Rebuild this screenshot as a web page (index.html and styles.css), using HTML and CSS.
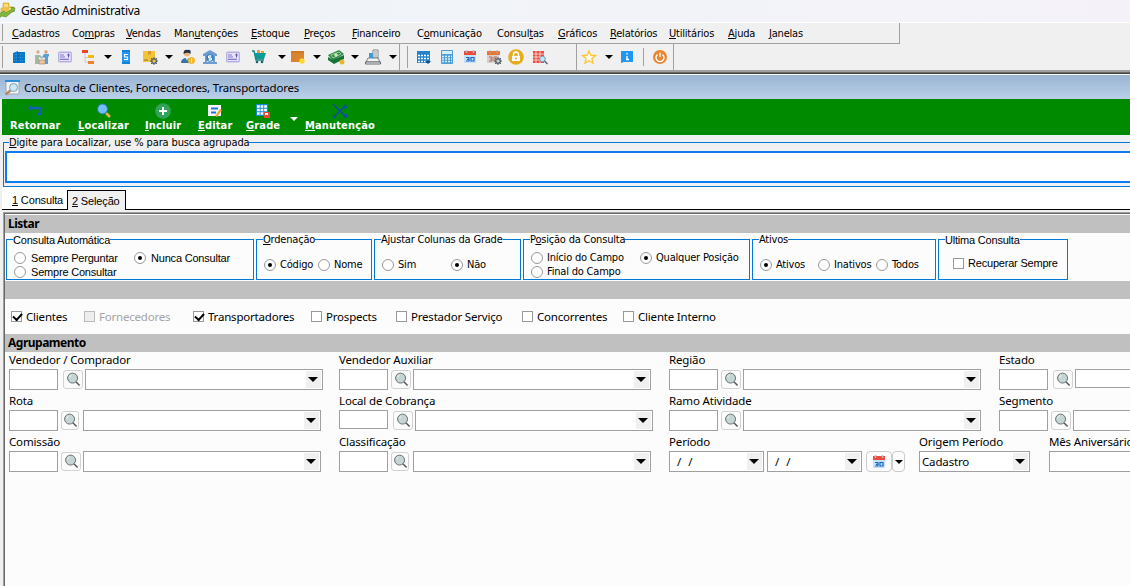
FILE: index.html
```html
<!DOCTYPE html>
<html lang="pt-BR">
<head>
<meta charset="utf-8">
<title>Gestão Administrativa</title>
<link rel="stylesheet" href="styles.css">
</head>
<body>
<svg class="defs" width="0" height="0">
  <symbol id="mag" viewBox="0 0 16 16"><path d="M10.500 10.500l4 4" stroke="#555" stroke-width="1.600"/><circle cx="7" cy="6.500" r="5.300" fill="#c5d4d4" stroke="#606868"/><path d="M4 6q0-2 2-3" stroke="#edf5f5" fill="none"/></symbol>
  <symbol id="card" viewBox="0 0 16 16"><rect x="1" y="2.500" width="14" height="11" rx="2" fill="#b5afe4"/><rect x="2.300" y="4" width="11.400" height="8" fill="#e5e2fa"/><path d="M3 6h4M3 8h5M3 10.300h9M10 6h3" stroke="#8279c8" stroke-width="1.200"/><path d="M11.500 4.500v4" stroke="#5e54b3"/></symbol>
  <symbol id="cal" viewBox="0 0 16 16"><path d="M2 5h12v9H2z" fill="#c3e1fb"/><path d="M2 2h12v4H2z" fill="#e94b3c"/><path d="M4.500 1v3M11.500 1v3" stroke="#b8bdc1" stroke-width="1.500"/><path d="M4 8.500h3v3.500H4M5 10.300h2M9 8.500h3v3.500H9z" fill="none" stroke="#1f65bf" stroke-width="1.200"/></symbol>
  <symbol id="gear" viewBox="0 0 8 8"><circle cx="4" cy="4" r="2.300" fill="none" stroke="#59666e" stroke-width="1.500"/><path d="M4 0v2M4 6v2M0 4h2M6 4h2M1 1l1.500 1.500M5.500 5.500L7 7M7 1L5.500 2.500M2.500 5.500L1 7" stroke="#59666e"/></symbol>
</svg>

<header class="titlebar">
  <svg class="logo" viewBox="0 0 16 16"><path d="M3 1h6v4h5v4l-5 3H1V6h2z" fill="#edc246" stroke="#dca529" stroke-width=".6"/><path d="M4 2h4v3H4zM9 6h4v3H9z" fill="#f6dc83"/><path d="M-1 12l5-3 2 2 6-4-1-2 4 1-1 4-1-1-7 6-4-1-3 2z" fill="#7fb744" stroke="#4e8b2b" stroke-width=".6"/></svg>
  <span>Gestão Administrativa</span>
</header>

<nav class="menubar">
  <span><u>C</u>adastros</span><span>Co<u>m</u>pras</span><span><u>V</u>endas</span><span>Man<u>u</u>tenções</span><span><u>E</u>stoque</span><span><u>P</u>reços</span><span><u>F</u>inanceiro</span><span>C<u>o</u>municação</span><span>Consul<u>t</u>as</span><span><u>G</u>ráficos</span><span><u>R</u>elatórios</span><span><u>U</u>tilitários</span><span><u>A</u>juda</span><span><u>J</u>anelas</span>
</nav>

<div class="toolbars">
  <div class="bar bar-main">
    <svg viewBox="0 0 16 16"><path d="M2 4l5-2v1h7v11H2z" fill="#0878cb"/><path d="M3 5.500h10M3 8.500h10M3 11.500h10" stroke="#2f97dd" stroke-dasharray="1 1"/><path d="M7 3v11" stroke="#075b9d"/></svg>
    <svg viewBox="0 0 16 16"><circle cx="4" cy="3" r="1.700" fill="#d3b083"/><circle cx="12" cy="3" r="1.700" fill="#d3a072"/><path d="M1 6h5l3 3-1 1-3-2v7H1z" fill="#a5b8a8"/><path d="M10 5h5v2l-1 1v7h-3V9L8 8z" fill="#5c9fd2"/><path d="M5 11h6v4H5z" fill="#ecc6a0" stroke="#ba815c" stroke-width=".7"/></svg>
    <svg><use href="#card"/></svg>
    <svg viewBox="0 0 16 16"><path d="M4 4v9h5M4 8.500h5" fill="none" stroke="#bbb" stroke-width=".7"/><path d="M1 1h6v3H1z" fill="#e3472a"/><path d="M7 6h6v3H7z" fill="#f4b713"/><path d="M7 12h6v3H7z" fill="#ee8235"/></svg>
    <i class="arrow"></i>
    <svg viewBox="0 0 16 16"><path d="M4 1h8v14H4z" fill="#2196f3"/><path d="M4 1h8v2H4zM4 13h8v2H4z" fill="#1281d4"/><path d="M10 5.500H6.500v2.500h3v2.500H6" fill="none" stroke="#fff" stroke-width="1.200"/></svg>
    <svg viewBox="0 0 16 16"><path d="M1 2h12v11H1z" fill="#f3c338"/><path d="M6 2h3v4l-1.500-1L6 6z" fill="#da962c"/><path d="M2 11h4" stroke="#937534"/><use href="#gear" x="8" y="8" width="8" height="8"/></svg>
    <i class="arrow"></i>
    <svg viewBox="0 0 16 16"><circle cx="7" cy="4.500" r="3" fill="#efb57b"/><path d="M3.500 5q0-5 4-4 4-1 3 4Q8 2.500 3.500 5" fill="#243445"/><path d="M1 14q0-5 6-5t6 5z" fill="#3273a9"/><path d="M6 9h2l-1 3z" fill="#fff"/><circle cx="11.500" cy="11.500" r="3.500" fill="#f4b82b"/><path d="M11.500 9.500v4" stroke="#fff0a0"/></svg>
    <svg viewBox="0 0 16 16"><path d="M1 5l7-4 7 4v2H1zM1 13h14v2H1zM3 7h2v6H3zM11 7h2v6h-2z" fill="#6b9bd1"/><circle cx="8" cy="9" r="3.700" fill="#397bbd"/><path d="M9.500 7h-3v2h3v2h-3M8 6v6" fill="none" stroke="#fff"/></svg>
    <svg><use href="#card"/></svg>
    <svg viewBox="0 0 16 16"><path d="M1 2h2l2 9h8" fill="none" stroke="#167b78" stroke-width="1.300"/><path d="M3 4h12l-2 6H5z" fill="#0c9b99"/><path d="M6 1h3v3H6zM10 2h3v2h-3z" fill="#ef9b38"/><circle cx="6" cy="13" r="1.300" fill="#17656d"/><circle cx="11" cy="13" r="1.300" fill="#17656d"/></svg>
    <i class="arrow"></i>
    <svg viewBox="0 0 16 16"><path d="M1 2h13v11H1z" fill="#d9832f"/><path d="M1 2h13v2H1z" fill="#ce7928"/><circle cx="12" cy="12" r="2.700" fill="#ffd82c"/></svg>
    <i class="arrow"></i>
    <svg class="cash" viewBox="0 0 18 16"><path d="M1 6l11-5 5 4-11 7z" fill="#2b8a45"/><path d="M1 8l5 3 11-5v4L7 15 1 11z" fill="#187238"/><path d="M4 6l8-3 2 2-8 4z" fill="none" stroke="#b9e1b0" stroke-width=".8"/><circle cx="9" cy="6" r="1.800" fill="#cce9bd"/><circle cx="15" cy="13" r="2.500" fill="#e3b92b"/></svg>
    <i class="arrow"></i>
    <svg viewBox="0 0 16 16"><path d="M8 1h5v8H8z" fill="#fff" stroke="#555" stroke-width=".7"/><path d="M9 3h3M9 5h3M9 7h3" stroke="#777" stroke-width=".8"/><path d="M3 9h10l2 4H1z" fill="#f0f3f5" stroke="#5b626b" stroke-width=".8"/><path d="M.5 13h15v2H.5z" fill="#eee" stroke="#474e57" stroke-width=".8"/><path d="M4 4h4v5H4z" fill="#3d9bd8"/></svg>
    <i class="arrow"></i>
  </div>
  <div class="bar bar-tools">
    <svg viewBox="0 0 16 16"><path d="M1 2h13v12H1z" fill="#2283cc"/><path d="M2 6.500h11M2 9.500h11M2 12.500h8" stroke="#fff" stroke-width="1.500" stroke-dasharray="2 1"/><path d="M9 12h6l-3 3z" fill="#174e7f"/></svg>
    <svg viewBox="0 0 16 16"><rect x="2" y="1" width="12" height="14" rx="1" fill="#4a9edb"/><path d="M3 2h10v3H3z" fill="#d8f0ff"/><path d="M3 7.500h10M3 10h10M3 12.500h10" stroke="#d9edfa" stroke-width="1.500" stroke-dasharray="2 1"/></svg>
    <svg><use href="#cal"/></svg>
    <svg viewBox="0 0 16 16"><path d="M1 5h12v9H1z" fill="#d4d0cf"/><path d="M1 2h13v4H1z" fill="#e67939"/><path d="M4 1v3M11 1v3" stroke="#aaa"/><path d="M3 8h3v4H3M4 10h2M8 12V8h3" fill="none" stroke="#b46d5c"/><use href="#gear" x="8" y="8" width="8" height="8"/></svg>
    <svg viewBox="0 0 16 16"><circle cx="8" cy="8" r="7.800" fill="#e5ad20"/><path d="M5.500 7V5.500a2.500 2.500 0 015 0V7" fill="none" stroke="#fff" stroke-width="1.500"/><path d="M4 7h8v5H4z" fill="#fff"/><circle cx="8" cy="9.500" r="1" fill="#e5ad20"/></svg>
    <svg viewBox="0 0 16 16"><path d="M1 2h11v12H1z" fill="#ed4941"/><path d="M1 5h11M1 8h11M1 11h11M4 2v12M8 2v12" stroke="#ffe6dc" stroke-width=".8"/><circle cx="10.500" cy="10" r="2.800" fill="#bce6ff" stroke="#7899ad"/><path d="M12.500 12l3 3" stroke="#47606c" stroke-width="1.300"/></svg>
  </div>
  <div class="bar bar-help">
    <svg viewBox="0 0 16 16"><path d="M8 2l1.800 4.200 4.700.4-3.600 3 1.100 4.600L8 11.700l-4 2.500 1.100-4.600-3.600-3 4.700-.4z" fill="#fffbea" stroke="#ffc32c" stroke-width="1.300"/></svg>
    <i class="arrow"></i>
    <svg viewBox="0 0 16 16"><path d="M2 2h12v11H5l-3 1z" fill="#2196f3"/><path d="M8 4v1.500M8 7v4M7 10.500h3" stroke="#fff" stroke-width="1.400"/></svg>
    <i class="separator"></i>
    <svg viewBox="0 0 16 16"><circle cx="8" cy="8" r="7" fill="#e98431"/><path d="M5.500 5.500a4 4 0 105 0M8 3.500V8" fill="none" stroke="#fff" stroke-width="1.400"/></svg>
  </div>
</div>

<main class="window">
  <div class="window-title">
    <svg viewBox="0 0 16 16"><path d="M1 1h13v13H1z" fill="#f2f5f7" stroke="#9ba8b2"/><path d="M0 0h15v2H0z" fill="#2c8eda"/><path d="M5.500 10.500l-5 4" stroke="#b48b5c" stroke-width="2.500"/><circle cx="8.500" cy="7.500" r="4" fill="#c9e9f7" stroke="#849cac"/></svg>
    <span>Consulta de Clientes, Fornecedores, Transportadores</span>
  </div>
  <div class="actions">
    <div><svg viewBox="0 0 16 16"><path d="M2 5h9q3 0 3 3t-3 3.500" fill="none" stroke="#1260b8" stroke-width="2.400"/><path d="M5 1v8L1 5z" fill="#1260b8"/><path d="M2 12h9" stroke="#1260b8" stroke-width="3" stroke-dasharray="1 1"/></svg><span>Retornar</span></div>
    <div><svg viewBox="0 0 16 16"><path d="M10 10l4 4" stroke="#e1b548" stroke-width="2.500"/><circle cx="6.500" cy="6" r="5" fill="#71bef8" stroke="#2c75bc"/></svg><span><u>L</u>ocalizar</span></div>
    <div><svg viewBox="0 0 16 16"><circle cx="8" cy="8" r="7.800" fill="#2fa45a"/><path d="M8 4v8M4 8h8" stroke="#fff" stroke-width="2"/></svg><span><u>I</u>ncluir</span></div>
    <div><svg viewBox="0 0 16 16"><path d="M1 2h13v11H1z" fill="#f5f8ff"/><path d="M4 5.500h7M4 9.500h5" stroke="#2772cf" stroke-width="2"/><path d="M8 13l5-7 2 1-5 7z" fill="#f4a72e"/></svg><span><u>E</u>ditar</span></div>
    <div><svg viewBox="0 0 16 16"><path d="M1 1h12v12H1z" fill="#188bd0"/><path d="M2 3.500h10M2 7h10M2 10.500h10" stroke="#fff" stroke-width="2.500" stroke-dasharray="2.700 .9"/><path d="M9 9h6v6H9z" fill="#e54a34"/><path d="M10 10h3v2h-3z" fill="#fff"/></svg><span><u>G</u>rade</span></div>
    <i class="arrow light"></i>
    <div><svg viewBox="0 0 16 16"><path d="M3 3l10 10M12 4l-9 9" stroke="#0d4f9f" stroke-width="1.700"/><path d="M1 1l2 2M11 5l3-4M12 5l3-1M11 13l3 1 1-3M1 12l2 3" fill="none" stroke="#0d4f9f" stroke-width="1.500"/></svg><span><u>M</u>anutenção</span></div>
  </div>

  <fieldset class="search"><legend><u>D</u>igite para Localizar, use % para busca agrupada</legend><div class="search-input"></div></fieldset>

  <div class="tabs"><span><u>1</u> Consulta</span><span class="active"><u>2</u> Seleção</span></div>

  <section class="panel">
    <h2>Listar</h2>
    <div class="groups">
      <fieldset class="plain g-auto two-rows"><legend>Consulta Automática</legend>
        <label><i class="radio"></i>Sempre Perguntar</label><label><i class="radio on"></i>Nunca Consultar</label><label><i class="radio"></i>Sempre Consultar</label>
      </fieldset>
      <fieldset class="g-order"><legend><u>O</u>rdenação</legend><label><i class="radio on"></i>Código</label><label><i class="radio"></i>Nome</label></fieldset>
      <fieldset class="g-adjust"><legend>Ajustar Colunas da Grade</legend><label><i class="radio"></i>Sim</label><label><i class="radio on"></i>Não</label></fieldset>
      <fieldset class="g-pos two-rows"><legend>P<u>o</u>sição da Consulta</legend><label><i class="radio"></i>Início do Campo</label><label><i class="radio on"></i>Qualquer Posição</label><label><i class="radio"></i>Final do Campo</label></fieldset>
      <fieldset class="g-active"><legend>Ativos</legend><label><i class="radio on"></i>Ativos</label><label><i class="radio"></i>Inativos</label><label><i class="radio"></i>Todos</label></fieldset>
      <fieldset class="plain g-last"><legend>Ultima Consulta</legend><label><i class="check"></i>Recuperar Sempre</label></fieldset>
    </div>
    <div class="band"></div>
    <div class="types">
      <label><i class="check on"></i>Clientes</label><label class="disabled"><i class="check"></i>Fornecedores</label><label><i class="check on"></i>Transportadores</label><label><i class="check"></i>Prospects</label><label><i class="check"></i>Prestador Serviço</label><label><i class="check"></i>Concorrentes</label><label><i class="check"></i>Cliente Interno</label>
    </div>
    <h2>Agrupamento</h2>
    <div class="filters">
      <div class="field wide-gap"><span>Vendedor / Comprador</span><div><b class="code"></b><b class="find"><svg><use href="#mag"/></svg></b><b class="combo"><i class="arrow"></i></b></div></div>
      <div class="field"><span>Vendedor Auxiliar</span><div><b class="code"></b><b class="find"><svg><use href="#mag"/></svg></b><b class="combo"><i class="arrow"></i></b></div></div>
      <div class="field"><span>Região</span><div><b class="code"></b><b class="find"><svg><use href="#mag"/></svg></b><b class="combo"><i class="arrow"></i></b></div></div>
      <div class="field wide-gap"><span>Estado</span><div><b class="code"></b><b class="find"><svg><use href="#mag"/></svg></b><b class="combo short"></b></div></div>
      <div class="field"><span>Rota</span><div><b class="code"></b><b class="find narrow"><svg><use href="#mag"/></svg></b><b class="combo"><i class="arrow"></i></b></div></div>
      <div class="field wide-gap"><span>Local de Cobrança</span><div><b class="code short"></b><b class="find"><svg><use href="#mag"/></svg></b><b class="combo"><i class="arrow"></i></b></div></div>
      <div class="field"><span>Ramo Atividade</span><div><b class="code"></b><b class="find"><svg><use href="#mag"/></svg></b><b class="combo"><i class="arrow"></i></b></div></div>
      <div class="field"><span>Segmento</span><div><b class="code"></b><b class="find"><svg><use href="#mag"/></svg></b><b class="combo"></b></div></div>
    </div>
    <div class="filters last">
      <div class="field"><span>Comissão</span><div><b class="code"></b><b class="find"><svg><use href="#mag"/></svg></b><b class="combo"><i class="arrow"></i></b></div></div>
      <div class="field"><span>Classificação</span><div><b class="code"></b><b class="find narrow"><svg><use href="#mag"/></svg></b><b class="combo"><i class="arrow"></i></b></div></div>
      <div class="field period"><span>Período</span><div><b class="combo date"><em>/</em><em>/</em><i class="arrow"></i></b><b class="combo date"><em>/</em><em>/</em><i class="arrow"></i></b><b class="calendar"><svg><use href="#cal"/></svg></b><b class="drop"><i class="arrow"></i></b></div></div>
      <div class="field"><span>Origem Período</span><div><b class="combo origin"><em>Cadastro</em><i class="arrow"></i></b></div></div>
      <div class="field"><span>Mês Aniversário</span><div><b class="combo"></b></div></div>
    </div>
  </section>
</main>
</body>
</html>
```

FILE: styles.css
```css
* { box-sizing: border-box; }
body {
  margin: 0; width: 1130px; height: 586px; overflow: hidden;
  background: #f0f0f0; color: #000; white-space: nowrap;
  font: 11px/14px "DejaVu Sans Condensed", "DejaVu Sans", sans-serif;
  letter-spacing: -.2px;
}
i, em, b { font-style: normal; font-weight: normal; }
u { text-underline-offset: 1px; text-decoration-thickness: 1px; }
svg { display: block; width: 16px; height: 16px; flex: none; }
.defs { position: absolute; width: 0; height: 0; }
fieldset { margin: 0; padding: 0; min-width: 0; border: 1px solid #0078d7; }
legend { padding: 0; }
.arrow { width: 0; height: 0; border: solid transparent; border-width: 4px 4px 0; border-top-color: #000; flex: none; }
.arrow.light { border-top-color: #fff; }

.titlebar { height: 23px; display: flex; align-items: center; gap: 5px; background: linear-gradient(90deg, #eef4f9, #f4f2f8); border-bottom: 1px solid #fff; font: 12px/16px "Noto Sans", sans-serif; letter-spacing: -.25px; }
.titlebar .logo { margin-top: -3px; }

.menubar {
  width: 900px; height: 21px; padding: 2px 0 0 12px;
  display: grid; align-items: center;
  grid-template-columns: 60px 54px 48px 77px 53px 48px 65px 80px 61px 52px 59px 59px 41px 60px;
  border: solid #a0a0a0; border-width: 0 1px 1px 0;
  background: linear-gradient(#a0a0a0, #a0a0a0) 2px 1px / 1px 17px no-repeat;
}

.toolbars { display: flex; height: 26px; }
.bar { display: grid; align-items: center; border-right: 1px solid #a0a0a0; }
.bar-main { width: 400px; padding-left: 11px; grid-template-columns: 23px 23px 24px 23px 14px 24px 23px 15px 22px 23px 26px 27px 12px 23px 14px 24px 14px 24px 8px; background: linear-gradient(#a0a0a0, #a0a0a0) 2px 2px / 1px 22px no-repeat; }
.bar-main .cash { width: 18px; }
.bar-tools { width: 177px; padding-left: 16px; grid-template-columns: 23px 23px 24px 22px 24px 16px; background: linear-gradient(#a0a0a0, #a0a0a0) 7px 2px / 1px 22px no-repeat; }
.bar-help { width: 97px; padding-left: 4px; grid-template-columns: 24px 14px 24px 9px 16px; }
.separator { width: 1px; height: 18px; background: #a0a0a0; }

.window { width: 1130px; overflow: hidden; border-top: 2px solid #a0a0a0; background: #f0f0f0; }
.window-title { height: 27px; padding: 3px 0 0 5px; display: flex; align-items: center; gap: 3px; border-top: 1px solid #696969; background: linear-gradient(#404040 1px, #fff 1px, #fff 2px, #99b4d1 2px, #bad0ea); font: 11.5px/16px "Noto Sans", sans-serif; letter-spacing: -.2px; }
.window-title span { padding-top: 1px; }
.actions { height: 36px; margin-left: 2px; padding: 4px 0 0 8px; display: grid; grid-template-columns: 68px 67px 53px 48px 44px 15px 71px; background: #008a00; color: #fff; font-weight: bold; }
.actions div { justify-self: start; display: flex; flex-direction: column; align-items: center; }
.actions span { line-height: 14px; letter-spacing: .15px; }
.actions .arrow { margin-top: 14px; }

.search { width: 1140px; height: 52px; margin-left: 3px; padding: 2px 0 0 1px; }
.search legend { margin-left: 4px; height: 14px; line-height: 16px; letter-spacing: -.13px; }
.search-input { height: 32px; border: 2px solid #0f7bf0; background: #fff; }
.tabs { height: 23px; margin-left: 2px; display: flex; align-items: flex-end; background: #fff; border-bottom: 1px solid #000; font-family: "Liberation Sans", sans-serif; letter-spacing: -.15px; }
.tabs span { width: 65px; padding-left: 10px; height: 17px; line-height: 17px; }
.tabs .active { width: 59px; padding-left: 4px; height: 20px; margin-bottom: -1px; background: #f0f0f0; border: solid #000; border-width: 1px 1px 0; line-height: 20px; }

.panel { height: 377px; margin: 2px 0 0 3px; border: solid #a0a0a0; border-width: 1px 0 0 1px; box-shadow: inset 1px 1px #696969; padding: 2px 0 0 1px; background: #fcfcfc; font: 11.5px/14px "Noto Sans", sans-serif; letter-spacing: -.15px; }
.panel h2 { margin: 0; padding-left: 3px; height: 18px; background: #c0c0c0; font-size: 12px; line-height: 17px; letter-spacing: -.5px; }
.groups { display: flex; gap: 2px; height: 48px; padding-left: 1px; font: 11px/14px "DejaVu Sans Condensed", sans-serif; letter-spacing: -.2px; }
.groups fieldset { height: 47px; display: grid; align-content: start; padding-top: 12px; }
.groups .two-rows { padding-top: 5px; }
.groups legend { margin-left: -1px; height: 13px; line-height: 14px; }
.groups .plain { font-family: "Liberation Sans", sans-serif; letter-spacing: -.2px; }
.groups label { display: flex; align-items: center; gap: 4px; }
.g-auto { width: 248px; padding-left: 7px; grid-template-columns: 120px auto; }
.groups .g-auto label { gap: 5px; }
.g-order { width: 116px; padding-left: 7px; grid-template-columns: 54px auto; }
.g-adjust { width: 147px; padding-left: 7px; grid-template-columns: 69px auto; }
.g-pos { width: 227px; padding-left: 7px; grid-template-columns: 109px auto; }
.g-active { width: 184px; padding-left: 7px; grid-template-columns: 58px 58px auto; }
.g-last { width: 130px; padding-left: 14px; }
.groups .g-last legend { margin-left: -8px; }
.groups .g-last { padding-top: 10px; }
.radio { width: 12px; height: 12px; border: 1px solid #999; border-radius: 50%; background: #fff; display: flex; align-items: center; justify-content: center; }
.radio.on::after { content: ""; width: 4px; height: 4px; border-radius: 50%; background: #000; }
.check { width: 11px; height: 11px; border: 1px solid #999; background: #fff; flex: none; }
.types .on::after { content: ""; display: block; width: 7px; height: 4px; margin: 1px 0 0 1px; border: solid #000; border-width: 0 0 2px 2px; transform: rotate(-48deg); }
.band { height: 18px; background: #c0c0c0; }
.types { height: 35px; padding-left: 6px; display: grid; align-items: center; grid-template-columns: 73px 109px 118px 85px 126px 101px 100px; letter-spacing: -.2px; }
.types label { display: flex; align-items: center; gap: 4px; }
.disabled { color: #a5a5a5; }
.disabled .check { background: #eee; border-color: #bbb; }
.filters { padding: 1px 0 0 4px; display: grid; grid-template-columns: repeat(4, 330px); grid-auto-rows: 41px; }
.filters.last { padding-top: 0; grid-template-columns: 330px 330px 250px 130px 300px; }
.field > span { display: block; height: 16px; }
.field > div { display: flex; align-items: flex-start; }
.code { width: 49px; height: 21px; border: 1px solid #a0a0a0; background: #fff; }
.find { width: 20px; height: 19px; margin: 1px 2px 0 3px; border: 1px solid #d2d2d2; border-radius: 3px; display: flex; justify-content: center; align-items: center; }
.find.narrow { width: 18px; margin-right: 4px; }
.find svg { width: 15px; height: 15px; }
.wide-gap .find { margin-left: 5px; }
.combo { width: 238px; height: 21px; border: 1px solid #a0a0a0; background: #fff linear-gradient(#f0f0f0, #f0f0f0) right 1px center / 15px 17px no-repeat; display: flex; align-items: center; }
.code.short, .combo.short { height: 19px; }
.combo .arrow { border-width: 5px 5px 0; margin-left: auto; margin-right: 4px; }
.date { width: 95px; padding-left: 7px; gap: 7px; margin-right: 3px; }
.origin { width: 111px; padding-left: 2px; }
.calendar { width: 26px; height: 21px; margin-left: 1px; border: 1px solid #ccc; border-radius: 4px; display: flex; justify-content: center; align-items: center; }
.drop { width: 13px; height: 21px; border: 1px solid #ccc; border-radius: 4px; display: flex; justify-content: center; align-items: center; }
```
